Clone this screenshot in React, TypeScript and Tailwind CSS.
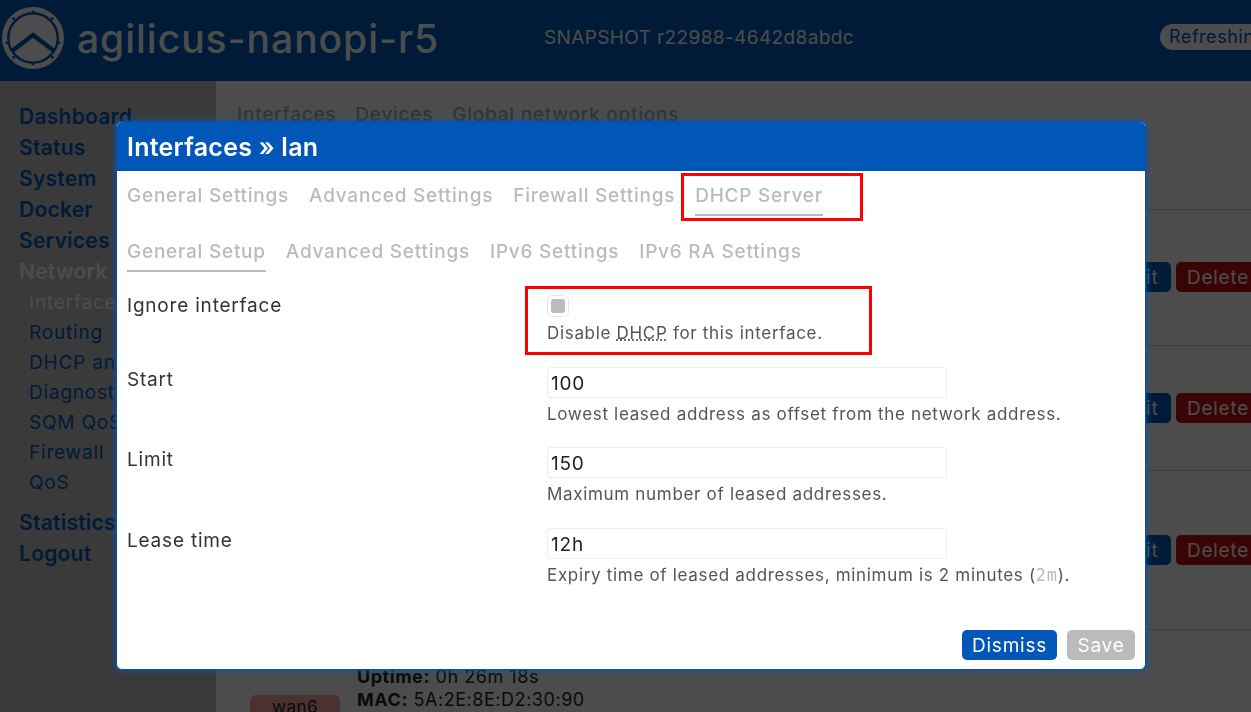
import React from 'react';

const navTop = ['Dashboard', 'Status', 'System', 'Docker', 'Services'];
const navSub = ['Interfaces', 'Routing', 'DHCP and DNS', 'Diagnostics', 'SQM QoS', 'Firewall', 'QoS'];

const font = { fontFamily: 'Inter, "Liberation Sans", sans-serif' };

const Logo = () => (
  <svg width="62" height="62" viewBox="0 0 64 64" className="shrink-0">
    <circle cx="32" cy="32" r="32" fill="#fff" />
    <circle cx="32" cy="32" r="25.5" fill="none" stroke="#005bbb" strokeWidth="2.5" />
    <path d="M11 45 L32 29 L53 45" fill="none" stroke="#005bbb" strokeWidth="4.5" />
    <path d="M32 3 l-2 3 h4z M32 61 l-2 -3 h4z M3 37 l3 -2 v4z M61 37 l-3 -2 v4z" fill="#005bbb" />
    <circle cx="12" cy="12" r="1.5" fill="#005bbb" />
    <circle cx="52" cy="12" r="1.5" fill="#005bbb" />
    <circle cx="12" cy="52" r="1.5" fill="#005bbb" />
    <circle cx="52" cy="52" r="1.5" fill="#005bbb" />
  </svg>
);

const Row = ({ className, offset }: { className: string; offset: string }) => (
  <div className={`border-t border-[#ccc] flex justify-end -mr-[9px] ${className}`}>
    <div className={`flex gap-[5px] ${offset}`}>
      <span className="h-[30px] w-[62px] rounded-[5px] bg-[#005bbb] text-white text-[19px] tracking-[0.04em] leading-[31px] text-center">Edit</span>
      <span className="h-[30px] w-[84px] rounded-[5px] bg-[#c01010] text-white text-[19px] tracking-[0.04em] leading-[31px] text-center">Delete</span>
    </div>
  </div>
);

const Field = ({ label, value, hint, className }: { label: string; value: string; hint: React.ReactNode; className: string }) => (
  <div className={`flex ${className}`}>
    <div className="w-[420px] pt-[1px] text-[19px] tracking-[0.042em] leading-[24px] text-[#333]">{label}</div>
    <div>
      <div className="w-[400px] h-[31px] border border-[#eee] rounded-[3px] px-[3px] text-[19px] tracking-[0.042em] leading-[31px] text-[#222]">{value}</div>
      <div className="mt-[4px] text-[17px] tracking-[0.04em] leading-[24px] text-[#555] whitespace-nowrap">{hint}</div>
    </div>
  </div>
);

const Tab = ({ label, active }: { label: string; active?: boolean }) => (
  <span className={`h-[35px] text-[19px] font-medium tracking-[0.04em] leading-[24px] pt-[3px] text-[#bbb] border-b-2 whitespace-nowrap ${active ? 'border-[#bbb]' : 'border-transparent'}`}>
    {label}
  </span>
);

export default function App() {
  return (
    <div className="relative h-[712px] w-[1251px] overflow-hidden bg-white" style={font}>
      <header className="h-[81px] bg-[#005bbb] flex items-center text-white">
        <div className="ml-[2px] mr-[13px] mb-[6px] shrink-0"><Logo /></div>
        <span className="w-[467px] shrink-0 text-[39px] font-medium tracking-[0.025em] leading-none whitespace-nowrap mb-[5px]">agilicus-nanopi-r5</span>
        <span className="w-[616px] shrink-0 text-[19px] tracking-[0.02em] whitespace-nowrap mb-[4px]">SNAPSHOT r22988-4642d8abdc</span>
        <span className="h-[26px] shrink-0 pl-[9px] pr-[20px] rounded-full bg-white text-[#005bbb] text-[18px] tracking-[0.03em] leading-[26px] -mt-[8px] whitespace-nowrap">Refreshing</span>
      </header>

      <div className="flex h-[631px]">
        <aside className="w-[216px] h-full bg-[#c4c4c4] pl-[19px] pt-[20px] shrink-0 whitespace-nowrap overflow-hidden">
          {navTop.map((n) => (
            <div key={n} className="text-[21px] font-semibold tracking-[0.012em] leading-[31px] text-[#005bbb]">{n}</div>
          ))}
          <div className="text-[21px] font-semibold tracking-[0.012em] leading-[31px] text-white">Network</div>
          {navSub.map((n, i) => (
            <div key={n} className={`pl-[10px] text-[19px] tracking-[0.042em] leading-[30px] ${i === 0 ? 'text-white mt-[1px]' : 'text-[#005bbb]'}`}>{n}</div>
          ))}
          <div className="text-[21px] font-semibold tracking-[0.012em] leading-[31px] mt-[9px] text-[#005bbb]">Statistics</div>
          <div className="text-[21px] font-semibold tracking-[0.012em] leading-[31px] text-[#005bbb]">Logout</div>
        </aside>
        <main className="flex-1 pl-[21px] pt-[22px] min-w-0">
          <div className="flex gap-[19px] text-[19px] font-medium tracking-[0.04em] text-[#aaa] leading-[24px]">
            <span>Interfaces</span><span>Devices</span><span>Global network options</span>
          </div>
          <div className="mt-[82px]">
            <Row className="h-[136px]" offset="mt-[52px]" />
            <Row className="h-[125px]" offset="mt-[47px]" />
            <Row className="h-[159px]" offset="mt-[64px]" />
            <div className="border-t border-[#ccc] flex pl-[13px] pt-[35px] gap-[17px] text-[#222]">
              <span className="h-[40px] w-[90px] mt-[30px] rounded-[6px] bg-[#f8a8a8] text-center text-[17px] tracking-[0.03em] leading-[24px]">wan6</span>
              <div className="text-[18px] tracking-[0.03em] leading-[23px] whitespace-nowrap">
                <div><b>Uptime:</b> 0h 26m 18s</div>
                <div><b>MAC:</b> 5A:2E:8E:D2:30:90</div>
              </div>
            </div>
          </div>
        </main>
      </div>

      <div className="fixed inset-0 bg-black/70 pl-[116px] pt-[121px]">
        <div className="relative w-[1030px] h-[549px] bg-white rounded-[6px] border border-[#0d4f9c] shadow-[0_0_6px_#0057b7] overflow-hidden">
          <h4 className="h-[49px] bg-[#0057b7] px-[10px] text-white text-[25px] font-semibold tracking-[0.01em] leading-[50px]">Interfaces » lan</h4>
          <div className="px-[10px] pt-[10px]">
            <div className="flex gap-[20px]">
              <Tab label="General Settings" />
              <Tab label="Advanced Settings" />
              <Tab label="Firewall Settings" />
              <Tab label="DHCP Server" active />
            </div>
            <div className="flex gap-[20px] mt-[21px]">
              <Tab label="General Setup" active />
              <Tab label="Advanced Settings" />
              <Tab label="IPv6 Settings" />
              <Tab label="IPv6 RA Settings" />
            </div>
            <div className="flex h-[73px] mt-[22px]">
              <div className="w-[420px] text-[19px] tracking-[0.042em] leading-[24px] text-[#333]">Ignore interface</div>
              <div className="pt-[1px]">
                <div className="w-[22px] h-[22px] rounded-[5px] border border-[#e8e8e8] flex items-center justify-center">
                  <div className="w-[14px] h-[14px] rounded-[3px] bg-[#bbb]" />
                </div>
                <div className="mt-[4px] text-[17px] tracking-[0.04em] leading-[24px] text-[#555] whitespace-nowrap">
                  Disable <abbr className="underline decoration-dotted">DHCP</abbr> for this interface.
                </div>
              </div>
            </div>
            <Field className="h-[80px]" label="Start" value="100" hint="Lowest leased address as offset from the network address." />
            <Field className="h-[81px]" label="Limit" value="150" hint="Maximum number of leased addresses." />
            <Field
              className="h-[80px]"
              label="Lease time"
              value="12h"
              hint={<>Expiry time of leased addresses, minimum is 2 minutes (<code className="text-[#bbb]" style={{ fontFamily: '"DejaVu Sans Mono", monospace' }}>2m</code>).</>}
            />
          </div>
          <div className="absolute right-[10px] bottom-[9px] flex gap-[10px] text-[19px] tracking-[0.04em] text-white">
            <span className="w-[95px] h-[30px] rounded-[5px] bg-[#0057b7] text-center leading-[31px]">Dismiss</span>
            <span className="w-[68px] h-[30px] rounded-[5px] bg-[#bbb] text-center leading-[31px]">Save</span>
          </div>
          <div className="absolute left-[564px] top-[51px] w-[182px] h-[48px] border-[3px] border-[#f00]" />
          <div className="absolute left-[408px] top-[164px] w-[347px] h-[69px] border-[3px] border-[#f00]" />
        </div>
      </div>
    </div>
  );
}
